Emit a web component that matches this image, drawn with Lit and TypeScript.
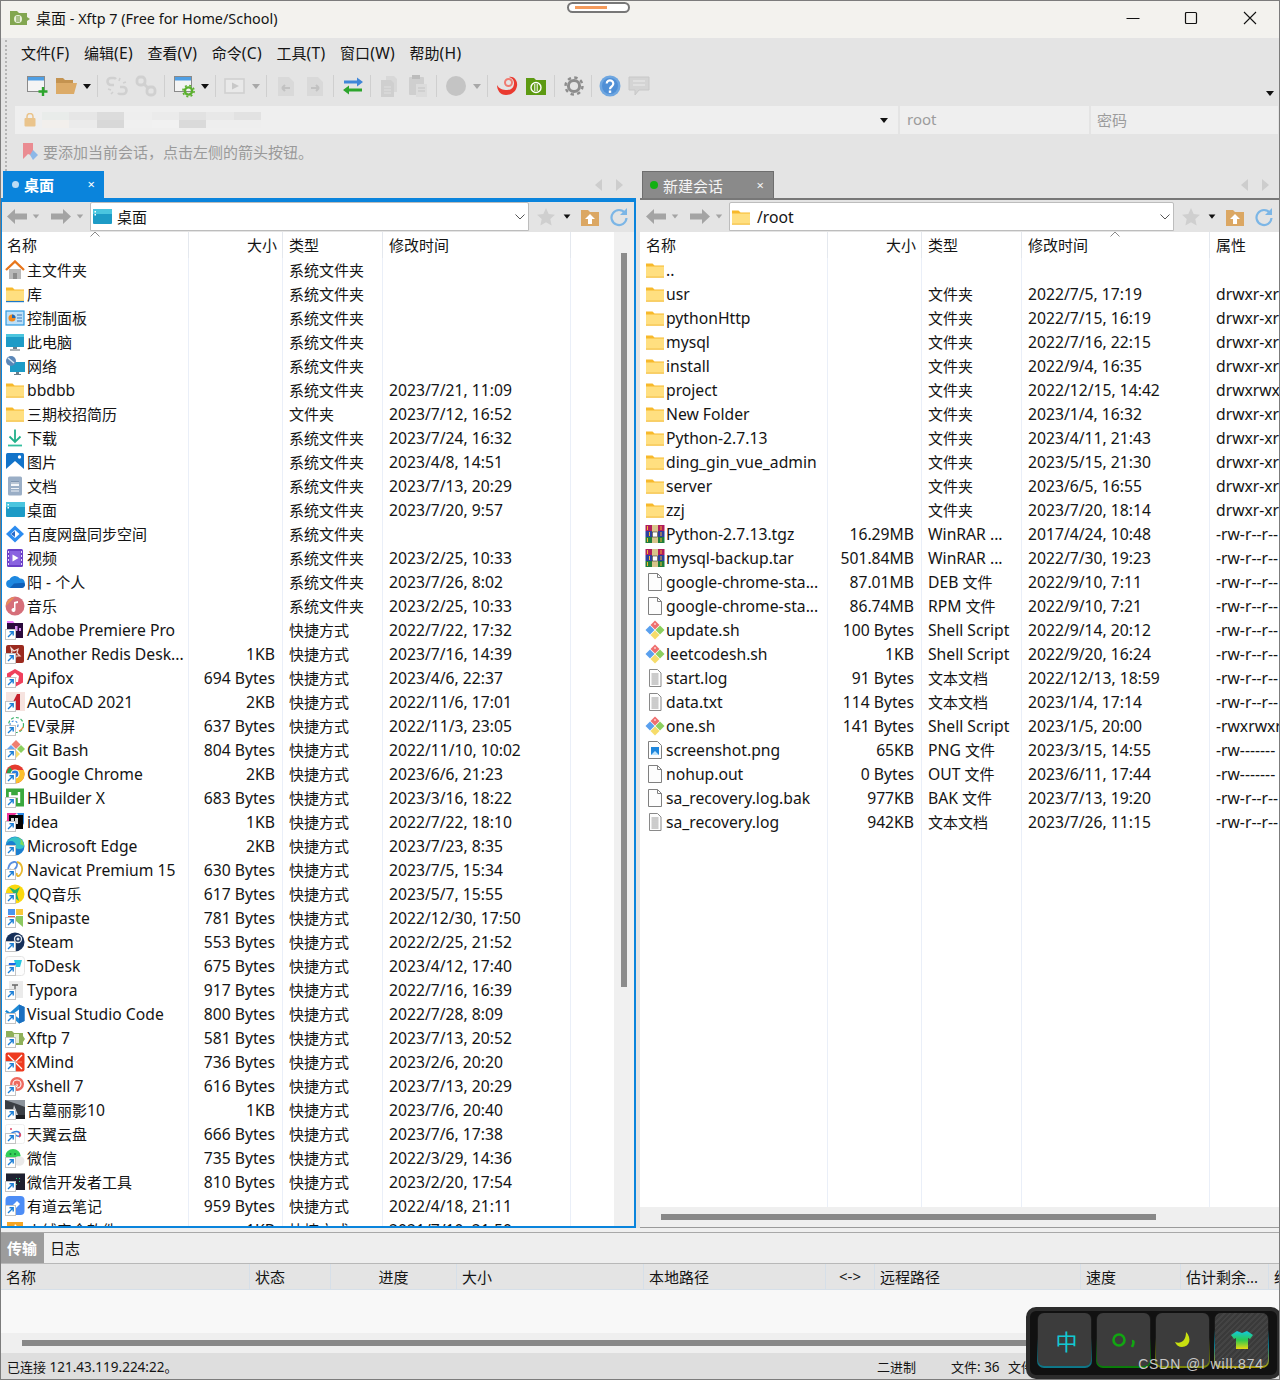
import { LitElement, html, css, svg, nothing } from 'lit';
import { customElement } from 'lit/decorators.js';

// 20x20 file list icons
const folderBody = svg`<path d="M1 3.500h6.500l2 2H19v12H1z" fill="#f7b92c"/><path d="M1 6.500h18v11H1z" fill="#ffdf80"/><path d="M1 16.500h18v1H1z" fill="#f2c04a"/>`;
const shellDiamond = svg`<path d="M10 .5l4.500 4.500L10 9.500 5.500 5z" fill="#ef6f6f"/><path d="M5 5.500L9.500 10 5 14.500.5 10z" fill="#5aa0ee"/><path d="M15 5.500l4.500 4.500-4.500 4.500-4.500-4.500z" fill="#8ccf5f"/><path d="M10 10.500l4.500 4.500-4.500 4.500L5.500 15z" fill="#f6dc6a"/><path d="M10 3L9 4l1 1 1-1z" fill="#fff"/>`;
const docLines = svg`<path d="M4.500 1.500h8l3.500 3.500v13.500h-11.500z" fill="#fdfdfd" stroke="#8a8a8a"/><path d="M6.500 6h7M6.500 8h7M6.500 10h7M6.500 12h7M6.500 14h7M6.500 16h7" stroke="#9a9a9a"/>`;

const icons: Record<string, unknown> = {
  folder: folderBody,
  lib: svg`${folderBody}<path d="M1 17h18v1.200H1z" fill="#1d78c8"/>`,
  home: svg`<path d="M4 9h12v10H4z" fill="#b9b9b9"/><path d="M8 13h4v6H8z" fill="#8d8d8d"/><path d="M1 10L10 1.500 19 10" fill="none" stroke="#e8761c" stroke-width="2.400"/>`,
  control: svg`<rect x="1" y="3" width="18" height="14" fill="#bfe0f7" stroke="#2f9ae0" stroke-width="1.200"/><circle cx="7" cy="10" r="3.500" fill="#f28a1e"/><path d="M7 10V6.500A3.500 3.500 0 0 1 10.500 10z" fill="#1d66b8"/><path d="M12 7h5M12 10h5M12 13h5" stroke="#3a78b8"/>`,
  pc: svg`<rect x="1" y="2" width="18" height="13" fill="#1d9bc6"/><path d="M1 2h18v3H1z" fill="#4cc5de"/><path d="M8 15h4v2H8z" fill="#6a7f8c"/><path d="M5 17.500h10v1H5z" fill="#55656f"/>`,
  net: svg`<rect x="5" y="6" width="15" height="10" fill="#1d9bc6"/><path d="M11 16h3v2h-3zM9 18h7v1H9z" fill="#6a7f8c"/><circle cx="6" cy="5" r="5" fill="#5b87b8"/><path d="M3 2l6 5" stroke="#d8e6f2" stroke-width="1.500"/>`,
  download: svg`<path d="M10 1.500v12M4.500 8.500l5.500 5.500 5.500-5.500" fill="none" stroke="#21b08a" stroke-width="1.800"/><path d="M3 17.500h14" stroke="#34bfa0" stroke-width="1.800"/>`,
  pics: svg`<rect x="1" y="1" width="18" height="18" rx="1.500" fill="#1273c9"/><path d="M1 17l9-8 9 8v2H1z" fill="#fff"/><circle cx="14.500" cy="5" r="1.700" fill="#fff"/>`,
  docs: svg`<rect x="3" y="0.500" width="14" height="19" rx="1.500" fill="#9aaec6"/><path d="M6 5h8v5H6z" fill="#fff" opacity=".9"/><path d="M6 12.500h8M6 15h8" stroke="#eef2f7"/><path d="M6 7h8M6 5.500h8" stroke="#7f95b0"/>`,
  desktop: svg`<rect x="1" y="2" width="19" height="15" rx="1" fill="#1d9bc6"/><path d="M1 2h19v5H1z" fill="#4ac5df"/><path d="M2.500 4h1.500v1.500H2.500zM2.500 7h1.500v1.500H2.500z" fill="#fff"/>`,
  baidu: svg`<path d="M10 1.500L19 10l-9 8.500L1 10z" fill="#2c8cf0"/><path d="M10 6l4.500 4-4.500 4-4.500-4z" fill="#fff"/><path d="M6 10l4-3v6z" fill="#2567c8"/>`,
  video: svg`<rect x="2" y="1" width="16" height="18" rx="1.500" fill="#6b3fc8"/><path d="M4.500 3h11v14h-11z" fill="#8a63e0"/><path d="M7.500 6.500l6 3.500-6 3.500z" fill="#fff"/><path d="M3 3h1v2H3zM3 7h1v2H3zM3 11h1v2H3zM3 15h1v2H3zM16 3h1v2h-1zM16 7h1v2h-1zM16 11h1v2h-1zM16 15h1v2h-1z" fill="#e5dafa"/>`,
  onedrive: svg`<path d="M5 16a4.200 4.200 0 0 1-.500-8.300A6 6 0 0 1 15 6.500a4.800 4.800 0 0 1 1 9.500z" fill="#1e88e0"/><path d="M5 16h12a3 3 0 0 0 2-5.200L9 11.500z" fill="#0f5fb8"/>`,
  music: svg`<circle cx="10" cy="10" r="9.500" fill="#d66f7a"/><path d="M1 10a9 9 0 0 1 9-9z" fill="#e99058"/><path d="M9 14V6l4-1v2l-2.500.500V14a2 2 0 1 1-1.500-2z" fill="#fff"/>`,
  premiere: svg`<path d="M2 2h6l1 1h9v15H2z" fill="#2a0a3c"/><path d="M2 1h6l1.500 2H2z" fill="#e879f9"/><path d="M10 6h2.500v5H10zM14 8h2v3h-2z" fill="#d58af0"/>`,
  redis: svg`<rect x="1" y="1" width="18" height="18" rx="2" fill="#9b2a1e"/><path d="M6 4l3 3 4-2-1 4 3 3-4 0-1 4-2-4-3-1 2-3z" fill="none" stroke="#f2dcd6" stroke-width="1.200"/>`,
  apifox: svg`<path d="M10 1l8 4.500v9L10 19l-8-4.500v-9z" fill="#f0405c"/><path d="M6 8l4-3 4 3-1 6H7z" fill="#fff"/><path d="M8.500 9h3l-1.500 3z" fill="#f0405c"/>`,
  autocad: svg`<rect x="1" y="0" width="19" height="19" fill="#f6e3df"/><path d="M4 18L12 2h3v16h-4v-3H8l-1.500 3z" fill="#c51f2c"/><path d="M11 12V8l-2 4z" fill="#f6e3df"/>`,
  ev: svg`<circle cx="11" cy="9" r="7.500" fill="none" stroke="#39b36a" stroke-width="1.200" stroke-dasharray="3 2"/><circle cx="9" cy="9" r="4" fill="none" stroke="#3b8be0" stroke-width="1.200" stroke-dasharray="2 2"/><path d="M14 15a6 6 0 0 0 4-4" stroke="#ee8a3c" fill="none" stroke-width="1.200"/>`,
  gitbash: svg`<path d="M11 0l4.500 4.500-4.500 4.500-4.500-4.500z" fill="#ef7f6f"/><path d="M16 5l4 4-4 4-4-4z" fill="#8ccf5f"/><path d="M6 5l4 4-4 4-4-4z" fill="#6aa7ef"/><path d="M11 10l4 4-4 4-4-4z" fill="#f6dc6a"/>`,
  chrome: svg`<circle cx="10" cy="10" r="9.500" fill="#e53a2f"/><path d="M10 19.500A9.500 9.500 0 0 0 18.700 6H10z" fill="#fbc02d"/><path d="M10 19.500L10 10 5 3A9.500 9.500 0 0 0 10 19.500z" fill="#2ca24c"/><circle cx="10" cy="10" r="4.500" fill="#fff"/><circle cx="10" cy="10" r="3.400" fill="#2b7de0"/>`,
  hbuilder: svg`<rect x="1" y="0.500" width="18" height="18" fill="#3aa83e"/><path d="M5 4v11M14 4v11M5 8.500h9" stroke="#fff" stroke-width="2.400"/>`,
  idea: svg`<path d="M2 1h10l-10 10z" fill="#f0339a"/><path d="M12 1h7v12z" fill="#2e8ae6"/><path d="M1 8l6 10h-6z" fill="#f97a12"/><rect x="4" y="3" width="14" height="14" fill="#050505"/><path d="M6 6h3v6H6zM10 6h3v6h-3z" fill="#fff" opacity=".85"/>`,
  edge: svg`<circle cx="10" cy="10" r="9.500" fill="#1b7fd0"/><path d="M1 10a9 9 0 0 1 18 0c0 2-2 3-5 3-3 0-4-1-3-3a5 5 0 0 0-10 0z" fill="#35c1c8"/><path d="M19 10c0-5-4-9.500-9-9.500C15 1 17 5 15 8z" fill="#7ddc5c"/>`,
  navicat: svg`<path d="M6 16C1 12 3 3 9 2c4-.500 4 4 1 7-2 2-4 2-5 0" fill="none" stroke="#5a8fe0" stroke-width="1.800"/><path d="M12 2c5 1 7 8 3 13-2 2-4 1-3-2" fill="none" stroke="#e8b830" stroke-width="1.800"/>`,
  qq: svg`<circle cx="10" cy="10" r="9.500" fill="#fbd80d"/><path d="M4 3l6 3 5-3-3 7 2 7-4-3-1-4z" fill="#23b26b"/>`,
  snipaste: svg`<path d="M3 1h7v6H3z" fill="#4a94ee"/><path d="M11 1h7v6h-7z" fill="#f8c83a"/><path d="M3 8h7v2H3z" fill="#ee5a4a"/><path d="M11 8h7v11l-7-6z" fill="#8cc860"/><path d="M3 11h7v4H3z" fill="#5aa0ee"/>`,
  steam: svg`<circle cx="10" cy="10" r="9.500" fill="#16305a"/><circle cx="13" cy="7" r="3.500" fill="none" stroke="#e4eaf2" stroke-width="1.300"/><circle cx="13" cy="7" r="1.500" fill="#e4eaf2"/><path d="M1 11l7 3 3-4" stroke="#e4eaf2" fill="none" stroke-width="1.300"/>`,
  todesk: svg`<rect x="0.500" y="0.500" width="19" height="19" rx="3" fill="#fdfdfd" stroke="#e4e4e4"/><path d="M9 4h8l-2 7h-4z" fill="#26c6e0"/><path d="M4 7h7l-2 6H3z" fill="#1b66e6"/>`,
  typora: svg`<path d="M4 1h14v17H4z" fill="#ebebeb"/><path d="M7 5h6M10 5v6" stroke="#666" stroke-width="1.300"/>`,
  vscode: svg`<path d="M14 0.500l5.500 2.500v14L14 19.500l-9-8-3.500 2.500L0 12.500 3 10 0 7.500 1.500 6 5 8.500z" fill="#1f8ad6"/><path d="M14 .5l5.500 2.500v14L14 19.500z" fill="#1b6fc0"/><path d="M14 5.500L8 10l6 4.500z" fill="#fff"/>`,
  xftp: svg`<path d="M1 3h6l2 2h9v3l2 3-2 3v3H1z" fill="#8fb05a"/><path d="M9 6h5v9H9z" fill="#e6f0d6"/>`,
  xmind: svg`<rect x="0.500" y="0.500" width="19" height="19" rx="2" fill="#ee3a1f"/><path d="M3 3l14 14M17 3L3 17" stroke="#fff" stroke-width="1.300"/><path d="M3 10h14" stroke="#ff8a6a"/>`,
  xshell: svg`<circle cx="12" cy="8" r="7" fill="#ef6a5f"/><path d="M12 12a4 4 0 1 0-4-4c0 2 2 3 3.500 2.500 1-.500 1-2 0-2.500" fill="none" stroke="#fff" stroke-width="1.100"/><path d="M0 9h5v2H0z" fill="#ef6a5f"/>`,
  gumu: svg`<rect x="0" y="0" width="20" height="19" fill="#3a3e44"/><path d="M0 0h20v7L12 4z" fill="#8d949c"/><path d="M9 5l4 10H7z" fill="#c8ccd2"/><path d="M0 15h20v4H0z" fill="#1e2024"/>`,
  tianyi: svg`<rect x="0.500" y="0.500" width="19" height="19" rx="2" fill="#fff" stroke="#eee"/><path d="M4 13c2-6 10-7 11-3 .500 3-4 3-5 0" fill="none" stroke="#2f7fe0" stroke-width="1.500"/><path d="M14 9c2 1 2 3 0 4" stroke="#e04a6a" fill="none" stroke-width="1.500"/><circle cx="6" cy="5" r="1" fill="#e04a6a"/>`,
  wechat: svg`<ellipse cx="8" cy="7.500" rx="7.500" ry="6.500" fill="#34d058"/><ellipse cx="14" cy="13" rx="5.500" ry="4.800" fill="#e9e9e9"/><circle cx="5.500" cy="6" r="1" fill="#16803a"/><circle cx="10" cy="6" r="1" fill="#16803a"/>`,
  wxdev: svg`<rect x="1" y="1" width="19" height="17" fill="#1e2030"/><path d="M1 1h19v1H1z" fill="#888"/><path d="M11 6h1v1h-1zM14 6h1v1h-1zM14 9h1v1h-1zM11 12h1v1h-1z" fill="#31d07a"/>`,
  youdao: svg`<rect x="0.500" y="0" width="19" height="19" rx="4" fill="#4d8df6"/><path d="M5 12l7-7 3 3-7 7H5z" fill="#fff"/>`,
  huorong: svg`<path d="M2 2h16v13l-8 4-8-4z" fill="#f5a524"/><path d="M10 4c3 3 4 5 3 8a3 3 0 0 1-6 0c0-3 2-4 3-8z" fill="#fff"/>`,
  rar: svg`<rect x="0.500" y="1" width="19" height="6" fill="#b01d5c"/><rect x="0.500" y="7" width="19" height="6" fill="#2c3f9e"/><rect x="0.500" y="13" width="19" height="6" fill="#1f7d3a"/><path d="M7 1h6v18H7z" fill="#d8c48a"/><rect x="7.500" y="8" width="5" height="5" fill="#fff" stroke="#333" stroke-width=".6"/><path d="M2.500 2v4M4.500 8v4M2.500 14v4M16 2v4M16 8v4M16 14v4" stroke="#f2b632"/>`,
  blank: svg`<path d="M3.500 1.500h9l4 4v13h-13z" fill="#fdfdfd" stroke="#808080"/><path d="M12.500 1.500v4h4" fill="none" stroke="#808080"/>`,
  shell: shellDiamond,
  text: docLines,
  png: svg`<path d="M3.500 1.500h9l4 4v13h-13z" fill="#fdfdfd" stroke="#808080"/><rect x="6" y="7" width="8" height="8" fill="#1e86dc"/><path d="M6 15l4-4 4 4z" fill="#bfe4fb"/>`,
};

const shortcutBadge = svg`<rect x="0.500" y="9.500" width="10" height="10" fill="#fff" stroke="#c4c4c4"/><path d="M3 17l5-5M4.500 11.800h3.700v3.700" fill="none" stroke="#1b7ed6" stroke-width="1.400"/>`;

type Row = [string, string, string, string, string, string?];

// icon | name | size | type | time
const LEFT: Row[] = [
  ['home', '主文件夹', '', '系统文件夹', ''],
  ['lib', '库', '', '系统文件夹', ''],
  ['control', '控制面板', '', '系统文件夹', ''],
  ['pc', '此电脑', '', '系统文件夹', ''],
  ['net', '网络', '', '系统文件夹', ''],
  ['folder', 'bbdbb', '', '系统文件夹', '2023/7/21, 11:09'],
  ['folder', '三期校招简历', '', '文件夹', '2023/7/12, 16:52'],
  ['download', '下载', '', '系统文件夹', '2023/7/24, 16:32'],
  ['pics', '图片', '', '系统文件夹', '2023/4/8, 14:51'],
  ['docs', '文档', '', '系统文件夹', '2023/7/13, 20:29'],
  ['desktop', '桌面', '', '系统文件夹', '2023/7/20, 9:57'],
  ['baidu', '百度网盘同步空间', '', '系统文件夹', ''],
  ['video', '视频', '', '系统文件夹', '2023/2/25, 10:33'],
  ['onedrive', '阳 - 个人', '', '系统文件夹', '2023/7/26, 8:02'],
  ['music', '音乐', '', '系统文件夹', '2023/2/25, 10:33'],
  ['premiere', 'Adobe Premiere Pro', '', '快捷方式', '2022/7/22, 17:32'],
  ['redis', 'Another Redis Desk...', '1KB', '快捷方式', '2023/7/16, 14:39'],
  ['apifox', 'Apifox', '694 Bytes', '快捷方式', '2023/4/6, 22:37'],
  ['autocad', 'AutoCAD 2021', '2KB', '快捷方式', '2022/11/6, 17:01'],
  ['ev', 'EV录屏', '637 Bytes', '快捷方式', '2022/11/3, 23:05'],
  ['gitbash', 'Git Bash', '804 Bytes', '快捷方式', '2022/11/10, 10:02'],
  ['chrome', 'Google Chrome', '2KB', '快捷方式', '2023/6/6, 21:23'],
  ['hbuilder', 'HBuilder X', '683 Bytes', '快捷方式', '2023/3/16, 18:22'],
  ['idea', 'idea', '1KB', '快捷方式', '2022/7/22, 18:10'],
  ['edge', 'Microsoft Edge', '2KB', '快捷方式', '2023/7/23, 8:35'],
  ['navicat', 'Navicat Premium 15', '630 Bytes', '快捷方式', '2023/7/5, 15:34'],
  ['qq', 'QQ音乐', '617 Bytes', '快捷方式', '2023/5/7, 15:55'],
  ['snipaste', 'Snipaste', '781 Bytes', '快捷方式', '2022/12/30, 17:50'],
  ['steam', 'Steam', '553 Bytes', '快捷方式', '2022/2/25, 21:52'],
  ['todesk', 'ToDesk', '675 Bytes', '快捷方式', '2023/4/12, 17:40'],
  ['typora', 'Typora', '917 Bytes', '快捷方式', '2022/7/16, 16:39'],
  ['vscode', 'Visual Studio Code', '800 Bytes', '快捷方式', '2022/7/28, 8:09'],
  ['xftp', 'Xftp 7', '581 Bytes', '快捷方式', '2023/7/13, 20:52'],
  ['xmind', 'XMind', '736 Bytes', '快捷方式', '2023/2/6, 20:20'],
  ['xshell', 'Xshell 7', '616 Bytes', '快捷方式', '2023/7/13, 20:29'],
  ['gumu', '古墓丽影10', '1KB', '快捷方式', '2023/7/6, 20:40'],
  ['tianyi', '天翼云盘', '666 Bytes', '快捷方式', '2023/7/6, 17:38'],
  ['wechat', '微信', '735 Bytes', '快捷方式', '2022/3/29, 14:36'],
  ['wxdev', '微信开发者工具', '810 Bytes', '快捷方式', '2023/2/20, 17:54'],
  ['youdao', '有道云笔记', '959 Bytes', '快捷方式', '2022/4/18, 21:11'],
  ['huorong', '火绒安全软件', '1KB', '快捷方式', '2021/7/10, 21:50'],
];

// icon | name | size | type | time | attrs
const RIGHT: Row[] = [
  ['folder', '..', '', '', '', ''],
  ['folder', 'usr', '', '文件夹', '2022/7/5, 17:19', 'drwxr-xr-x'],
  ['folder', 'pythonHttp', '', '文件夹', '2022/7/15, 16:19', 'drwxr-xr-x'],
  ['folder', 'mysql', '', '文件夹', '2022/7/16, 22:15', 'drwxr-xr-x'],
  ['folder', 'install', '', '文件夹', '2022/9/4, 16:35', 'drwxr-xr-x'],
  ['folder', 'project', '', '文件夹', '2022/12/15, 14:42', 'drwxrwxr-x'],
  ['folder', 'New Folder', '', '文件夹', '2023/1/4, 16:32', 'drwxr-xr-x'],
  ['folder', 'Python-2.7.13', '', '文件夹', '2023/4/11, 21:43', 'drwxr-xr-x'],
  ['folder', 'ding_gin_vue_admin', '', '文件夹', '2023/5/15, 21:30', 'drwxr-xr-x'],
  ['folder', 'server', '', '文件夹', '2023/6/5, 16:55', 'drwxr-xr-x'],
  ['folder', 'zzj', '', '文件夹', '2023/7/20, 18:14', 'drwxr-xr-x'],
  ['rar', 'Python-2.7.13.tgz', '16.29MB', 'WinRAR ...', '2017/4/24, 10:48', '-rw-r--r--'],
  ['rar', 'mysql-backup.tar', '501.84MB', 'WinRAR ...', '2022/7/30, 19:23', '-rw-r--r--'],
  ['blank', 'google-chrome-sta...', '87.01MB', 'DEB 文件', '2022/9/10, 7:11', '-rw-r--r--'],
  ['blank', 'google-chrome-sta...', '86.74MB', 'RPM 文件', '2022/9/10, 7:21', '-rw-r--r--'],
  ['shell', 'update.sh', '100 Bytes', 'Shell Script', '2022/9/14, 20:12', '-rw-r--r--'],
  ['shell', 'leetcodesh.sh', '1KB', 'Shell Script', '2022/9/20, 16:24', '-rw-r--r--'],
  ['text', 'start.log', '91 Bytes', '文本文档', '2022/12/13, 18:59', '-rw-r--r--'],
  ['text', 'data.txt', '114 Bytes', '文本文档', '2023/1/4, 17:14', '-rw-r--r--'],
  ['shell', 'one.sh', '141 Bytes', 'Shell Script', '2023/1/5, 20:00', '-rwxrwxrwx'],
  ['png', 'screenshot.png', '65KB', 'PNG 文件', '2023/3/15, 14:55', '-rw-------'],
  ['blank', 'nohup.out', '0 Bytes', 'OUT 文件', '2023/6/11, 17:44', '-rw-------'],
  ['blank', 'sa_recovery.log.bak', '977KB', 'BAK 文件', '2023/7/13, 19:20', '-rw-r--r--'],
  ['text', 'sa_recovery.log', '942KB', '文本文档', '2023/7/26, 11:15', '-rw-r--r--'],
];

const MENUS = ['文件(F)', '编辑(E)', '查看(V)', '命令(C)', '工具(T)', '窗口(W)', '帮助(H)'];

// toolbar glyphs, 24x24
const GR = '#d0d0d0';
const tools: Record<string, unknown> = {
  new: svg`<rect x="2.500" y="2.500" width="17" height="15" fill="#f4f4f4" stroke="#8a8a8a"/><path d="M3 3h16v3.500H3z" fill="#4f9fe4"/><path d="M18 13v9M13.500 17.500h9" stroke="#2da52d" stroke-width="2.400"/>`,
  open: svg`<path d="M2 4h7l2 2h8v4H2z" fill="#c49350"/><path d="M2 9h21l-3 11H2z" fill="#dcab68"/>`,
  link1: svg`<g fill="none" stroke="${GR}" stroke-width="2.600"><path d="M9 11H6a3 3 0 0 1 0-7h3a3 3 0 0 1 2 1"/><path d="M15 13h3a3 3 0 0 1 0 7h-3a3 3 0 0 1-2-1"/></g><path d="M3 15l3 1M6 20l2-2M15 4l-1 3M21 8l-3 1" stroke="${GR}" stroke-width="1.600"/>`,
  link2: svg`<g fill="none" stroke="${GR}" stroke-width="2.800"><rect x="3" y="3" width="8" height="8" rx="3"/><rect x="13" y="13" width="8" height="8" rx="3"/></g><path d="M9 9l6 6" stroke="${GR}" stroke-width="2.800"/>`,
  props: svg`<rect x="2.500" y="2.500" width="17" height="15" fill="#f4f4f4" stroke="#8a8a8a"/><path d="M3 3h16v3.500H3z" fill="#4f9fe4"/><circle cx="16.500" cy="17" r="3.600" fill="none" stroke="#5bb02e" stroke-width="2.400"/><circle cx="16.500" cy="17" r="5.600" fill="none" stroke="#5bb02e" stroke-width="1.600" stroke-dasharray="2 2.400"/>`,
  play: svg`<rect x="2" y="5" width="19" height="14" fill="#e9e9e9" stroke="${GR}" stroke-width="1.600"/><path d="M9 8.500l7 3.500-7 3.500z" fill="#c8c8c8"/>`,
  docl: svg`<path d="M4 3h11l5 5v14H4z" fill="#d9d9d9"/><path d="M8 14h8M8 14l3-3M8 14l3 3" stroke="#c2c2c2" stroke-width="2" fill="none"/>`,
  docr: svg`<path d="M4 3h11l5 5v14H4z" fill="#d9d9d9"/><path d="M8 14h8M16 14l-3-3M16 14l-3 3" stroke="#c2c2c2" stroke-width="2" fill="none"/>`,
  swap: svg`<path d="M3 6.500h13V3.500l6 4.500-6 4.500v-3H3z" fill="#3f86d8"/><path d="M21 14.500H8v-3l-6 4.500 6 4.500v-3h13z" fill="#2da52d"/>`,
  copy: svg`<path d="M9 2h8l3 3v13H9z" fill="#d8d8d8"/><path d="M4 6h10l3 3v14H4z" fill="#cfcfcf"/><path d="M7 13h7M7 16h7M7 19h7" stroke="#e0e0e0" stroke-width="1.200"/>`,
  paste: svg`<rect x="3" y="3" width="15" height="18" rx="1" fill="#cfcfcf"/><path d="M6 1h8v4H6z" fill="#bcbcbc"/><path d="M10 10h11v13H10z" fill="#dcdcdc"/><path d="M12 14h7M12 17h7" stroke="#c4c4c4"/>`,
  globe: svg`<circle cx="12" cy="12" r="10" fill="#c4c4c4"/>`,
  xshell: svg`<path d="M2 11C4 15 8 16 12 16c5 0 7-3 7-7 0-3-2-5-5-6 5-1 9 4 8 9-1 6-6 9-11 9-6 0-9-5-9-10z" fill="#ea3a30"/><circle cx="13.500" cy="8.500" r="3.500" fill="none" stroke="#f07a70" stroke-width="2"/><circle cx="7" cy="7" r="1.800" fill="#e4e4e4"/>`,
  xftp: svg`<path d="M2 4h8l2 2h10v15H2z" fill="#5d9a12"/><circle cx="12" cy="13.500" r="5" fill="none" stroke="#fff" stroke-width="1.400"/><path d="M10.800 10v7M13.200 10v7" stroke="#fff"/>`,
  gear: svg`<circle cx="12" cy="12" r="5.600" fill="none" stroke="#8d8d8d" stroke-width="3"/><circle cx="12" cy="12" r="8.500" fill="none" stroke="#8d8d8d" stroke-width="2.400" stroke-dasharray="3.400 3.270"/><circle cx="12" cy="12" r="2.300" fill="#e4e4e4"/>`,
  help: svg`<circle cx="12" cy="12" r="10.500" fill="#6ea6e0"/><circle cx="12" cy="12" r="8" fill="#4f8fd6"/><path d="M8.700 9.500a3.300 3.300 0 1 1 5.200 2.800c-1.300.800-1.900 1.300-1.900 2.900" fill="none" stroke="#fff" stroke-width="2.200"/><path d="M10.800 16.500h2.400v2.400h-2.400z" fill="#fff"/>`,
  chat: svg`<path d="M2 3h20v13H12l-4 5v-5H2z" fill="#d4d4d4" stroke="#c8c8c8"/><path d="M6 7h12M6 11h12" stroke="#e4e4e4" stroke-width="1.500"/>`,
};

// [kind, width]
const TOOLBAR: [string, number][] = [
  ['new', 29], ['open', 29], ['dd', 13], ['sep', 9],
  ['link1', 29], ['link2', 29], ['sep', 9],
  ['props', 29], ['dd', 13], ['sep', 9],
  ['play', 29], ['ddg', 13], ['sep', 9],
  ['docl', 29], ['docr', 29], ['sep', 9],
  ['swap', 29], ['sep', 7],
  ['copy', 29], ['paste', 29], ['sep', 9],
  ['globe', 29], ['ddg', 13], ['sep', 9],
  ['xshell', 29], ['xftp', 29], ['sep', 9],
  ['gear', 29], ['sep', 7],
  ['help', 29], ['chat', 29],
];

const BLUR = [
  ['#e9ecea', '#f2efec'], ['#e6e6e6', '#ebebeb'], ['#dcdcdc', '#d8d8d8'], ['#eeeeee', '#f0f0f0'],
  ['#ebebeb', '#f1f1f1'], ['#e2e2e2', '#dadada'], ['#e8e8e8', '#eeeeee'], ['#e2e2e2', '#eeeeee'],
];

const backArrow = svg`<path d="M0 8.500L8 1v4.500h12v6H8V16z" fill="#a4a4a4"/>`;
const fwdArrow = svg`<path d="M20 8.500L12 1v4.500H0v6h12V16z" fill="#a4a4a4"/>`;

// latin runs are set a little larger than the CJK text around them
const t = (text: string) =>
  html`<span>${text.split(/([\x20-\x7e]+)/).map((part, i) => (i % 2 ? html`<span class="lat">${part}</span>` : part))}</span>`;

@customElement('app-root')
export class AppRoot extends LitElement {
  static styles = css`
    :host {
      display: block;
      width: 1280px;
      height: 1380px;
      font-family: 'Noto Sans', 'Noto Sans CJK SC', sans-serif;
      font-size: 15px;
      color: #141414;
    }
    * { box-sizing: border-box; }
    svg { display: block; flex: none; }
    .lat { font-size: 15.7px; }
    .win {
      position: relative;
      height: 1380px;
      display: flex;
      flex-direction: column;
      border: 1px solid #7c7c7c;
      overflow: hidden;
      background: #e4e4e4;
    }

    .title {
      height: 37px;
      flex: none;
      display: flex;
      align-items: center;
      padding: 0 0 4px 9px;
      background: #f3f2ee;
    }
    .title .text { margin-left: 6px; }
    .title .lat { font-size: 14.4px; }
    .ctrls { margin-left: auto; display: flex; }
    .ctrls button {
      width: 58.500px;
      height: 33px;
      border: 0;
      padding: 0;
      background: none;
      display: flex;
      align-items: center;
      justify-content: center;
    }
    .notch {
      position: absolute;
      left: 566px;
      top: 1px;
      width: 63px;
      height: 11px;
      padding: 2px 6px;
      border: 2px solid #777;
      border-radius: 6px;
      background: #fff;
    }
    .notch i { display: block; width: 32px; height: 3px; background: #f59a5a; }

    .top { flex: none; position: relative; padding-left: 14px; height: 133px; }
    .grip {
      position: absolute;
      left: 4px;
      top: 2px;
      bottom: 0;
      border-left: 2px dotted #b4b4b4;
    }
    .menu { display: flex; height: 32px; align-items: center; padding: 0 0 3px 6px; gap: 14.500px; }
    .menu .lat { letter-spacing: 0.3px; }
    .bar { display: flex; height: 36px; align-items: center; padding: 0 0 4px 7px; position: relative; }
    .bar .slot { display: flex; align-items: center; justify-content: center; height: 24px; }
    .bar .sep { width: 1px; height: 22px; background: #cfcfcf; }
    .caret {
      width: 0;
      height: 0;
      border-left: 4px solid transparent;
      border-right: 4px solid transparent;
      border-top: 5px solid #111;
    }
    .caret.off { border-top-color: #a8a8a8; }
    .bar .more { position: absolute; right: 5px; bottom: 10px; }

    .addr { display: flex; height: 28px; gap: 2px; padding-right: 1px; }
    .field {
      background: #efefef;
      display: flex;
      align-items: center;
      color: #9c9c9c;
      padding: 0 0 2px 7px;
    }
    .field.host { width: 883px; padding: 0 10px 0 9px; }
    .field.user { width: 189px; }
    .field.pass { flex: 1; padding-left: 6px; }
    .field.host .caret { margin-left: auto; }
    .mosaic { display: flex; margin-left: 6px; filter: blur(0.6px); }
    .mosaic div { width: 27.400px; }
    .mosaic span { display: block; height: 8px; }
    .hint {
      height: 37px;
      display: flex;
      align-items: center;
      gap: 5px;
      padding: 0 0 2px 7px;
      color: #9a9a9a;
    }

    .panes { flex: 1; min-height: 0; display: flex; gap: 4px; }
    .pane { display: flex; flex-direction: column; min-width: 0; }
    .pane.l { width: 635px; }
    .pane.r { flex: 1; }
    .tabs { height: 27px; flex: none; display: flex; position: relative; }
    .tab {
      display: flex;
      align-items: center;
      color: #fff;
      height: 27px;
      position: relative;
      padding-bottom: 1px;
    }
    .l .tab { width: 101px; margin-left: 2px; background: #0a84dc; font-weight: 700; padding-left: 9px; }
    .r .tab {
      width: 132px;
      margin-left: 2px;
      background: #8a8a8a;
      border: 1px solid #6e6e6e;
      border-bottom: 0;
      padding: 0 0 0 7px;
      color: #f4f4f4;
    }
    .dot { width: 7px; height: 7px; border-radius: 50%; margin-right: 5px; flex: none; }
    .l .dot { background: #bcdcf4; }
    .r .dot { background: #12b012; width: 8px; height: 8px; margin-right: 5px; }
    .tab .x { position: absolute; right: 9px; top: 4px; font-size: 13px; font-weight: 400; }
    .arrows { margin-left: auto; display: flex; gap: 14px; align-items: center; padding-right: 10px; }
    .l .arrows { padding-right: 13px; }
    .tri-l, .tri-r { width: 0; height: 0; border-top: 6px solid transparent; border-bottom: 6px solid transparent; }
    .tri-l { border-right: 7px solid #cdcdcd; }
    .tri-r { border-left: 7px solid #cdcdcd; }

    .frame { flex: 1; min-height: 0; display: flex; flex-direction: column; }
    .l .frame { border: 2px solid #0a84dc; border-top-width: 4px; border-left-width: 1px; }
    .r .frame { border-top: 2px solid #777; border-bottom: 1px solid #9a9a9a; padding-top: 2px; }
    .ptool { height: 29px; flex: none; display: flex; align-items: stretch; }
    .nav { width: 88px; flex: none; display: flex; align-items: center; padding-left: 5px; }
    .r .nav { width: 89px; padding-left: 6px; }
    .nav .caret { margin: 0 11px 0 5px; transform: scale(0.8); border-top-color: #a4a4a4; }
    .path {
      flex: 1;
      min-width: 0;
      background: #fff;
      border: 1px solid #bdbdbd;
      border-radius: 2px 2px 0 0;
      display: flex;
      align-items: center;
      padding: 0 3px 0 1px;
      gap: 5px;
    }
    .r .path { gap: 6px; }
    .path .chev { margin-left: auto; }
    .side { width: 105px; flex: none; display: flex; align-items: center; padding-left: 7px; }
    .side .caret { margin: 0 9px 0 7px; transform: scale(0.85); }
    .side .refresh { margin-left: 9px; }

    .body { flex: 1; min-height: 0; display: flex; background: #fff; margin-top: 1px; }
    .table { flex: 1; min-width: 0; display: flex; flex-direction: column; overflow: hidden; }
    .row { display: grid; height: 24px; flex: none; align-items: stretch; }
    .l .row { grid-template-columns: 187px 94px 100px 188px 1fr; }
    .r .row { grid-template-columns: 188px 94px 100px 188px 90px; }
    .row.head { height: 26px; }
    .row.fill { flex: 1; height: auto; }
    .cell {
      border-right: 1px solid #eaeff8;
      display: flex;
      align-items: center;
      padding: 0 0 0 6px;
      line-height: 20px;
      white-space: nowrap;
      overflow: hidden;
      min-width: 0;
      position: relative;
    }
    .cell:last-child { border-right: 0; }
    .cell.size { justify-content: flex-end; padding: 0 7px 0 0; }
    .cell.name { padding-left: 3px; gap: 2px; }
    .r .cell.name { padding-left: 5px; gap: 1px; }
    .head .cell { padding-left: 5px; border-right-color: #e4e8ee; overflow: visible; }
    .r .head .cell.name { padding-left: 6px; }
    .head .cell.size { padding: 0 5px 0 0; }
    .head .cell.type, .head .cell.time, .head .cell.attr { padding-left: 6px; }
    .sort { position: absolute; top: -1px; width: 10px; height: 6px; }
    .scroll-v { width: 20px; flex: none; background: #f0f0f0; display: flex; justify-content: center; padding-top: 21px; }
    .scroll-v i { display: block; width: 6px; height: 734px; background: #8c8c8c; }
    .scroll-h { height: 20px; flex: none; background: #efefef; padding: 7px 0 0 21px; }
    .scroll-h i { display: block; width: 495px; height: 6px; background: #888; }

    .split { height: 5px; flex: none; background: #efefef; border-bottom: 1px solid #a8a8a8; }
    .xtabs { height: 31px; flex: none; display: flex; align-items: stretch; background: #eee; border-bottom: 1px solid #b8b8b8; }
    .xtabs span { display: flex; align-items: center; width: 43px; padding: 0 0 1px 6px; }
    .xtabs .on { background: #9c9c9c; color: #fff; font-weight: 700; }
    .xhead {
      height: 26px;
      flex: none;
      display: grid;
      grid-template-columns: 249px 81px 126px 187px 182px 49px 206px 100px 88px 1fr;
      background: #e4e4e4;
      border-bottom: 1px solid #d6dfe8;
    }
    .xhead span {
      display: flex;
      align-items: center;
      padding: 0 0 1px 5px;
      border-right: 1px solid #d6dfe8;
      white-space: nowrap;
      overflow: hidden;
    }
    .xhead span:last-child { border-right: 0; }
    .xhead .mid { justify-content: center; padding-left: 0; }
    .xbody { height: 43px; flex: none; background: #f8f8f8; }
    .xscroll { height: 20px; flex: none; background: #efefef; padding: 7px 0 0 21px; }
    .xscroll i { display: block; width: 1100px; height: 6px; background: #888; }
    .status {
      height: 26px;
      flex: none;
      display: flex;
      align-items: center;
      padding: 0 0 0 6px;
      background: #dedede;
      white-space: nowrap;
      font-size: 13px;
    }
    .status .lat { font-size: 13.500px; }
    .status .a { position: absolute; left: 876px; }
    .status .b { position: absolute; left: 950px; }
    .status .c { position: absolute; left: 1007px; }

    .ime {
      position: absolute;
      right: -2px;
      bottom: 0;
      width: 255px;
      height: 72px;
      padding: 2px 7px;
      background: #111;
      border: 4px solid #2c2c2c;
      border-radius: 10px;
      display: flex;
      gap: 4px;
    }
    .key {
      width: 55px;
      height: 55px;
      border-radius: 7px;
      padding: 0 1px 2px;
    }
    .cap {
      height: 100%;
      border-radius: 6px;
      background: #3c3c3c;
      display: flex;
      align-items: center;
      justify-content: center;
      font-family: 'Noto Sans CJK SC', sans-serif;
      font-size: 22px;
    }
    .k1 { background: linear-gradient(#1a1a1a 45%, #0e7a8c); color: #12c8d2; }
    .k1 .cap { padding-left: 4px; }
    .k2 { background: linear-gradient(#1a1a1a 45%, #0a800a); }
    .k3 { background: linear-gradient(#1a1a1a 45%, #7c8a08); }
    .k4 { background: linear-gradient(#1a1a1a 30%, #0a7a90 60%, #b0a008); }
    .k4 .cap { background: repeating-linear-gradient(135deg, #3a3a3a 0 2px, #444 2px 4px); }
    .mark {
      position: absolute;
      right: 13px;
      bottom: 3px;
      font-family: 'Liberation Sans', sans-serif;
      font-size: 14px;
      letter-spacing: 0.85px;
      color: #c8c8c8;
    }
  `;

  private icon(name: string, shortcut = false) {
    return html`<svg width="20" height="20" viewBox="0 0 20 20">${icons[name] as never}${shortcut ? shortcutBadge : nothing}</svg>`;
  }

  private renderTool([kind, w]: [string, number]) {
    let inner: unknown;
    if (kind === 'sep') inner = html`<span class="sep"></span>`;
    else if (kind === 'dd') inner = html`<span class="caret"></span>`;
    else if (kind === 'ddg') inner = html`<span class="caret off"></span>`;
    else inner = html`<svg width="24" height="24" viewBox="0 0 24 24">${tools[kind] as never}</svg>`;
    return html`<span class="slot" style="width:${w}px">${inner}</span>`;
  }

  private sortMark(left: number) {
    return html`<svg class="sort" style="left:${left}px" viewBox="0 0 10 6"><path d="M0.500 5.500L5 1l4.500 4.500" fill="none" stroke="#8a8a8a"/></svg>`;
  }

  private renderNav() {
    return html`<div class="nav">
      <svg width="20" height="17" viewBox="0 0 20 17">${backArrow}</svg><span class="caret"></span>
      <svg width="20" height="17" viewBox="0 0 20 17">${fwdArrow}</svg><span class="caret"></span>
    </div>`;
  }

  private renderSide() {
    return html`<div class="side">
      <svg width="20" height="20" viewBox="0 0 20 20"><path d="M10 1l2.700 6 6.300.700-4.700 4.300 1.300 6.500L10 15.300 4.400 18.500 5.700 12 1 7.700 7.300 7z" fill="#cfcfcf"/></svg>
      <span class="caret"></span>
      <svg width="20" height="20" viewBox="0 0 20 20"><path d="M1 3h7l2 2h9v14H1z" fill="#dba763"/><path d="M10 7l5 5h-3v5H8v-5H5z" fill="#fff"/></svg>
      <svg class="refresh" width="20" height="20" viewBox="0 0 20 20"><path d="M16 6a7.500 7.500 0 1 0 1.500 5" fill="none" stroke="#7cb6e6" stroke-width="2.200"/><path d="M18 1v7h-7z" fill="#7cb6e6"/></svg>
    </div>`;
  }

  private renderPathChevron() {
    return html`<svg class="chev" width="10" height="6" viewBox="0 0 10 6"><path d="M0.500 0.500L5 5l4.500-4.500" fill="none" stroke="#555"/></svg>`;
  }

  render() {
    return html`
      <div class="win">
        <div class="title">
          <svg width="20" height="16" viewBox="0 0 20 16"><path d="M0 1h7l2 2h8v4l3 2-3 2v4H0z" fill="#82a650"/><circle cx="8" cy="9" r="4" fill="#e8f0da"/><path d="M7 6v6M9 6v6" stroke="#6a8f3a"/></svg>
          <span class="text">${t('桌面 - Xftp 7 (Free for Home/School)')}</span>
          <div class="ctrls">
            <button><svg width="14" height="14" viewBox="0 0 14 14"><path d="M0.500 7.500h13" stroke="#111"/></svg></button>
            <button><svg width="14" height="14" viewBox="0 0 14 14"><rect x="1.500" y="1.500" width="11" height="11" rx="1" fill="none" stroke="#111" stroke-width="1.200"/></svg></button>
            <button><svg width="14" height="14" viewBox="0 0 14 14"><path d="M1 1l12 12M13 1L1 13" stroke="#111" stroke-width="1.100"/></svg></button>
          </div>
        </div>
        <div class="notch"><i></i></div>

        <div class="top">
          <div class="grip"></div>
          <div class="menu">${MENUS.map(m => t(m))}</div>
          <div class="bar">
            ${TOOLBAR.map(i => this.renderTool(i))}
            <span class="caret more"></span>
          </div>
          <div class="addr">
            <div class="field host">
              <svg width="12" height="14" viewBox="0 0 12 14"><rect x="0.500" y="5" width="11" height="8.500" rx="1" fill="#eac48c"/><path d="M3 5V3.500a3 3 0 0 1 6 0V5" fill="none" stroke="#eac48c" stroke-width="1.500"/></svg>
              <div class="mosaic">${BLUR.map(([a, b]) => html`<div><span style="background:${a}"></span><span style="background:${b}"></span></div>`)}</div>
              <span class="caret"></span>
            </div>
            <div class="field user">root</div>
            <div class="field pass">密码</div>
          </div>
          <div class="hint">
            <svg width="16" height="20" viewBox="0 0 16 20"><path d="M1 1h10v13l-5-2-5 5z" fill="#ea8c92"/><path d="M11 8l5 5-5 5-3-5z" fill="#8db8e8"/></svg>
            <span>要添加当前会话，点击左侧的箭头按钮。</span>
          </div>
        </div>

        <div class="panes">
          <section class="pane l">
            <div class="tabs">
              <div class="tab"><span class="dot"></span>桌面<span class="x">×</span></div>
              <div class="arrows"><span class="tri-l"></span><span class="tri-r"></span></div>
            </div>
            <div class="frame">
              <div class="ptool">
                ${this.renderNav()}
                <div class="path">
                  ${this.icon('desktop')}<span>桌面</span>${this.renderPathChevron()}
                </div>
                ${this.renderSide()}
              </div>
              <div class="body">
                <div class="table">
                  <div class="row head">
                    <div class="cell name">名称${this.sortMark(88)}</div>
                    <div class="cell size">大小</div>
                    <div class="cell type">类型</div>
                    <div class="cell time">修改时间</div>
                    <div class="cell"></div>
                  </div>
                  ${LEFT.map(r => html`<div class="row">
                    <div class="cell name">${this.icon(r[0], r[3] === '快捷方式')}${t(r[1])}</div>
                    <div class="cell size">${t(r[2])}</div>
                    <div class="cell">${t(r[3])}</div>
                    <div class="cell">${t(r[4])}</div>
                    <div class="cell"></div>
                  </div>`)}
                </div>
                <div class="scroll-v"><i></i></div>
              </div>
            </div>
          </section>

          <section class="pane r">
            <div class="tabs">
              <div class="tab"><span class="dot"></span>新建会话<span class="x">×</span></div>
              <div class="arrows"><span class="tri-l"></span><span class="tri-r"></span></div>
            </div>
            <div class="frame">
              <div class="ptool">
                ${this.renderNav()}
                <div class="path">
                  ${this.icon('folder')}<span class="lat">/root</span>${this.renderPathChevron()}
                </div>
                ${this.renderSide()}
              </div>
              <div class="body">
                <div class="table">
                  <div class="row head">
                    <div class="cell name">名称</div>
                    <div class="cell size">大小</div>
                    <div class="cell type">类型</div>
                    <div class="cell time">修改时间${this.sortMark(88)}</div>
                    <div class="cell attr">属性</div>
                  </div>
                  ${RIGHT.map(r => html`<div class="row">
                    <div class="cell name">${this.icon(r[0])}${t(r[1])}</div>
                    <div class="cell size">${t(r[2])}</div>
                    <div class="cell">${t(r[3])}</div>
                    <div class="cell">${t(r[4])}</div>
                    <div class="cell">${t(r[5] ?? '')}</div>
                  </div>`)}
                  <div class="row fill"><div class="cell"></div><div class="cell"></div><div class="cell"></div><div class="cell"></div><div class="cell"></div></div>
                  <div class="scroll-h"><i></i></div>
                </div>
              </div>
            </div>
          </section>
        </div>

        <div class="split"></div>
        <div class="xtabs"><span class="on">传输</span><span>日志</span></div>
        <div class="xhead">
          <span>名称</span><span>状态</span><span class="mid">进度</span><span>大小</span><span>本地路径</span><span class="mid">&lt;-&gt;</span><span>远程路径</span><span>速度</span><span>估计剩余...</span><span>经过时间</span>
        </div>
        <div class="xbody"></div>
        <div class="xscroll"><i></i></div>
        <div class="status">
          ${t('已连接 121.43.119.224:22。')}
          <span class="a">二进制</span>
          <span class="b">${t('文件: 36')}</span>
          <span class="c">文件</span>
        </div>

        <div class="ime">
          <div class="key k1"><div class="cap">中</div></div>
          <div class="key k2"><div class="cap"><svg width="26" height="18" viewBox="0 0 26 18"><circle cx="8" cy="9" r="5.500" fill="none" stroke="#12a612" stroke-width="2.600"/><path d="M21 10c2 0 2 2 0 6" fill="none" stroke="#12a612" stroke-width="2.600"/></svg></div></div>
          <div class="key k3"><div class="cap"><svg width="18" height="18" viewBox="0 0 18 18"><path d="M12 1c6 6 4 15-4 15-3 0-6-2-7-5 5 2 11 0 11-10z" fill="#c8e010"/></svg></div></div>
          <div class="key k4"><div class="cap"><svg width="22" height="18" viewBox="0 0 22 18"><defs><linearGradient id="shirt" x1="0" y1="0" x2="0" y2="1"><stop offset="0" stop-color="#12c8e0"/><stop offset=".5" stop-color="#2cc850"/><stop offset="1" stop-color="#e8d810"/></linearGradient></defs><path d="M6 0l5 2 5-2 6 4-3 4-2-1v11H5V7L3 8 0 4z" fill="url(#shirt)"/></svg></div></div>
          <div class="mark">CSDN @I will.874</div>
        </div>
      </div>
    `;
  }
}
